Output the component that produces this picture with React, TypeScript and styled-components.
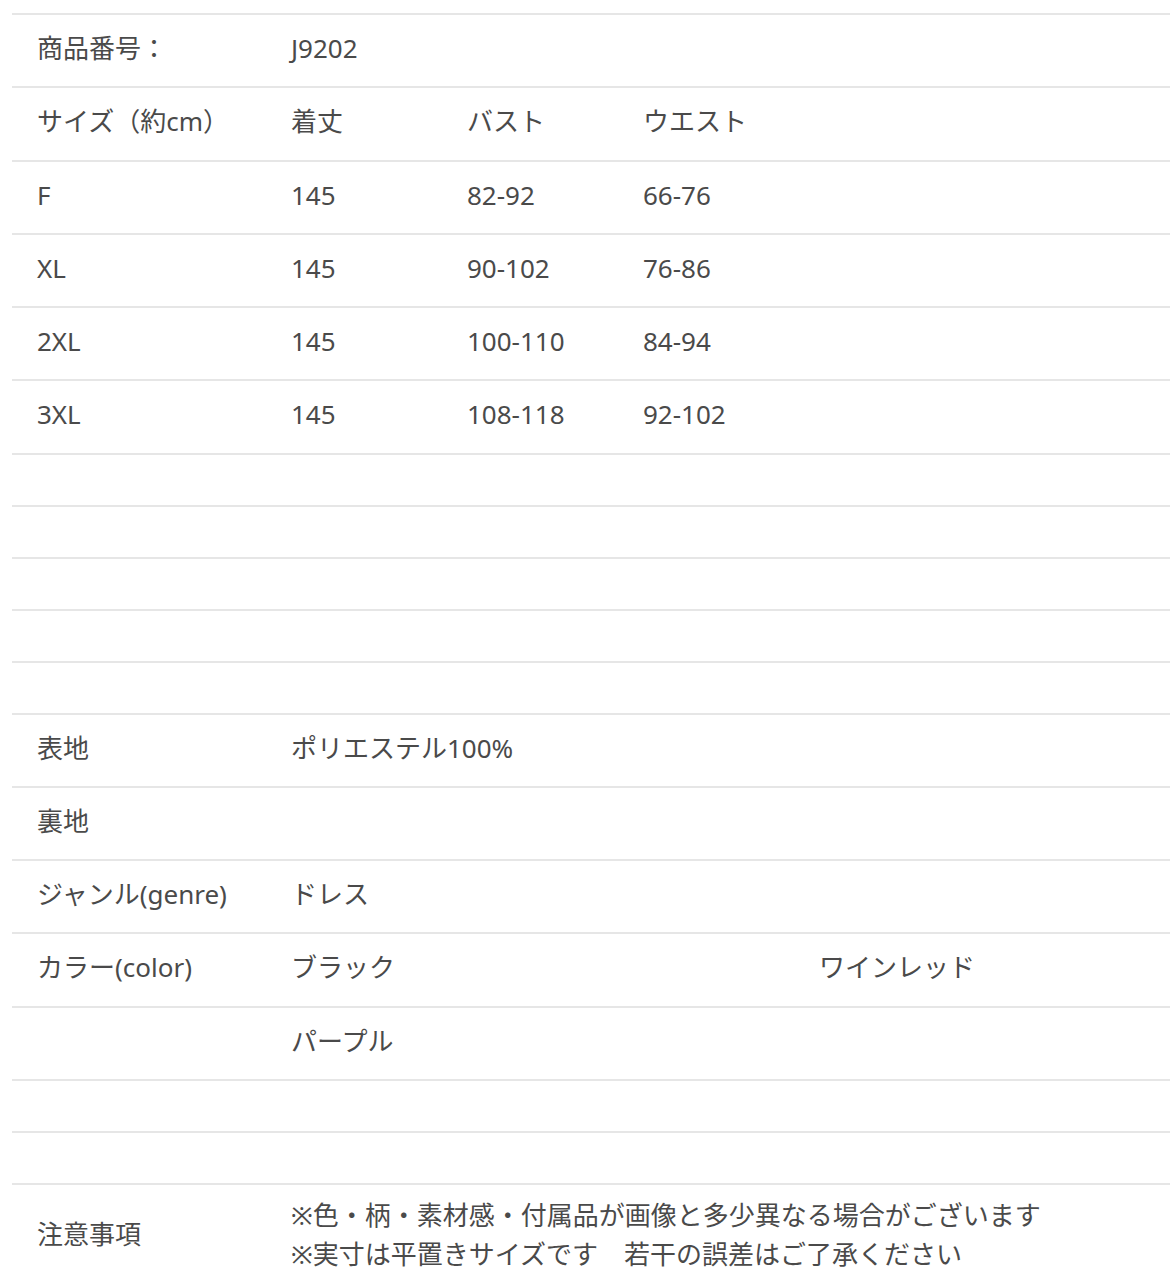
import { createGlobalStyle, styled } from "styled-components";

const GlobalStyle = createGlobalStyle`
  html, body {
    margin: 0;
    padding: 0;
    background: #ffffff;
  }
  body {
    font-family: "Noto Sans", "Noto Sans CJK JP", sans-serif;
    color: #4a4a4a;
  }
`;

interface SizeRow {
  size: string;
  length: string;
  bust: string;
  waist: string;
}

const sizes: SizeRow[] = [
  { size: "F", length: "145", bust: "82-92", waist: "66-76" },
  { size: "XL", length: "145", bust: "90-102", waist: "76-86" },
  { size: "2XL", length: "145", bust: "100-110", waist: "84-94" },
  { size: "3XL", length: "145", bust: "108-118", waist: "92-102" },
];

const App = () => {
  return (
    <>
      <GlobalStyle />
      <Page>
        <Row>
          <Label>商品番号：</Label>
          <Cell>J9202</Cell>
        </Row>
        <Row>
          <Label>サイズ（約cm）</Label>
          <Cell>着丈</Cell>
          <Cell>バスト</Cell>
          <Cell>ウエスト</Cell>
        </Row>
        {sizes.map((row) => (
          <Row key={row.size}>
            <Label>{row.size}</Label>
            <Cell>{row.length}</Cell>
            <Cell>{row.bust}</Cell>
            <Cell>{row.waist}</Cell>
          </Row>
        ))}
        <EmptyRow />
        <EmptyRow />
        <EmptyRow />
        <EmptyRow />
        <EmptyRow />
        <Row>
          <Label>表地</Label>
          <Cell $span={3}>ポリエステル100%</Cell>
        </Row>
        <Row>
          <Label>裏地</Label>
        </Row>
        <Row>
          <Label>ジャンル(genre)</Label>
          <Cell>ドレス</Cell>
        </Row>
        <Row>
          <Label>カラー(color)</Label>
          <Cell>ブラック</Cell>
          <Cell $col={5}>ワインレッド</Cell>
        </Row>
        <Row>
          <Label />
          <Cell>パープル</Cell>
        </Row>
        <EmptyRow />
        <EmptyRow />
        <NoteRow>
          <Label>注意事項</Label>
          <NoteText>
            ※色・柄・素材感・付属品が画像と多少異なる場合がございます
            <br />
            ※実寸は平置きサイズです　若干の誤差はご了承ください
          </NoteText>
        </NoteRow>
      </Page>
    </>
  );
};

export default App;

const Page = styled.div`
  width: 1170px;
  padding: 13px 0 0 12px;
  box-sizing: border-box;
  overflow: hidden;
`;

const Row = styled.div`
  display: grid;
  grid-template-columns: 279px repeat(5, 176px);
  align-items: center;
  min-height: 73.25px;
  padding-bottom: 3px;
  box-sizing: border-box;
  border-top: 2px solid #e6e6e6;
  font-size: 26px;
  line-height: 1.3;
`;

const EmptyRow = styled.div`
  height: 52px;
  box-sizing: border-box;
  border-top: 2px solid #e6e6e6;
`;

const Label = styled.div`
  padding-left: 25px;
  white-space: nowrap;
`;

const Cell = styled.div<{ $span?: number; $col?: number }>`
  white-space: nowrap;
  grid-column: ${({ $col, $span }) =>
    $col ? `${$col} / span 1` : $span ? `span ${$span}` : "auto"};
`;

const NoteRow = styled(Row)`
  padding: 11px 0 0;
`;

const NoteText = styled.div`
  grid-column: 2 / span 5;
  line-height: 39px;
  white-space: nowrap;
`;
